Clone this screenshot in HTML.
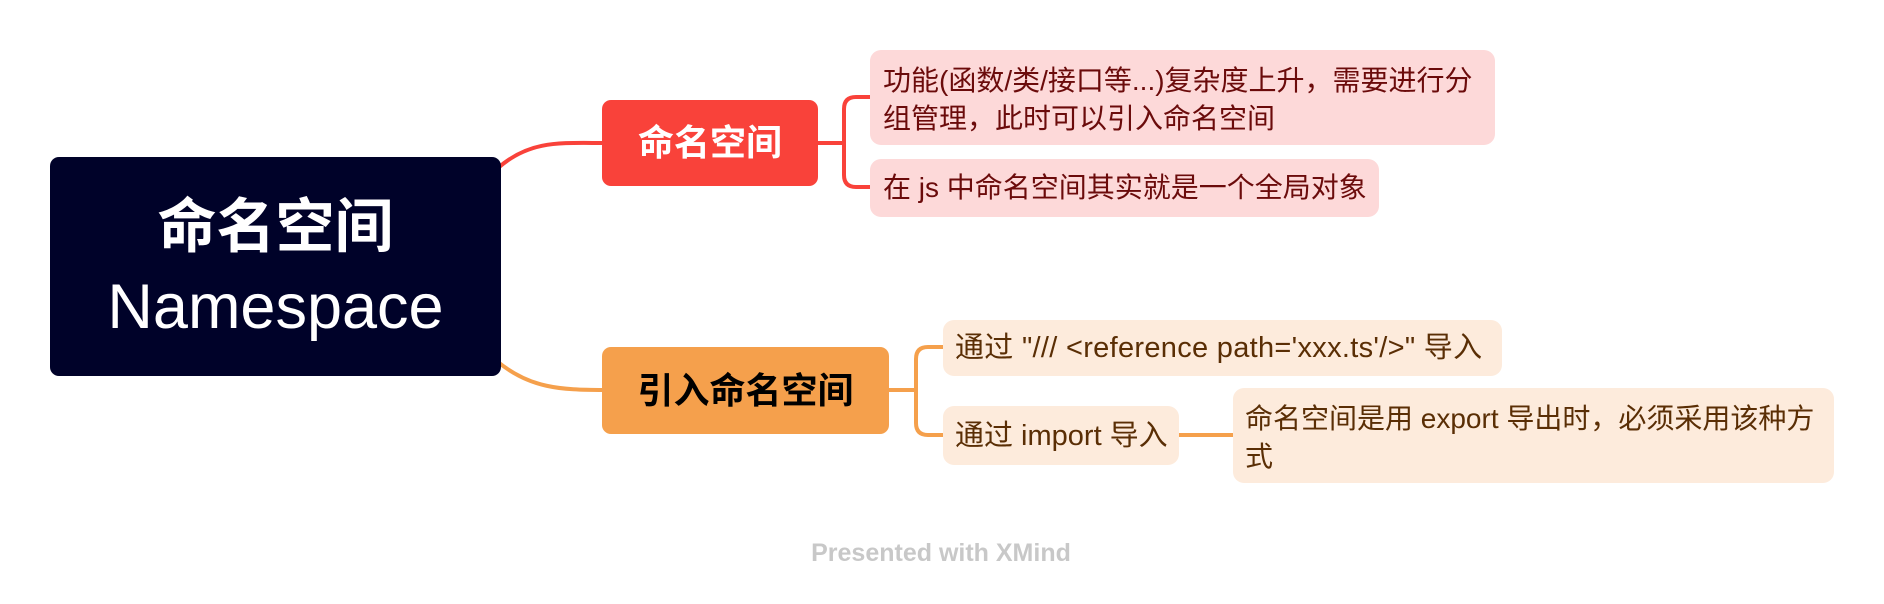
<!DOCTYPE html>
<html><head><meta charset="utf-8"><style>
body{margin:0;width:1884px;height:604px;background:#fff;position:relative;overflow:hidden;font-family:"Liberation Sans","Noto Sans CJK SC",sans-serif}
.b{position:absolute;box-sizing:border-box}
.t{position:absolute;white-space:nowrap}
</style></head><body>
<svg width="1884" height="604" style="position:absolute;left:0;top:0">
<g fill="none" stroke="#f9423a" stroke-width="4">
<path d="M498 168 C530 140 560 143 604 143"/>
<path d="M816 143 H844"/>
<path d="M870 97 H856 Q844 97 844 109 V175 Q844 187 856 187 H870"/>
</g>
<g fill="none" stroke="#f5a04c" stroke-width="4">
<path d="M498 362 C530 388 560 390 604 390"/>
<path d="M887 390 H916"/>
<path d="M943 347 H928 Q916 347 916 359 V423 Q916 435 928 435 H943"/>
<path d="M1177 435 H1235"/>
</g>
</svg>
<div class="b" style="left:50px;top:157px;width:451px;height:219px;background:#000229;border-radius:9px"></div>
<div class="t" style="left:50px;width:451px;text-align:center;top:192px;color:#fff;font-size:59px;font-weight:bold;line-height:70px">命名空间</div>
<div class="t" style="left:50px;width:451px;text-align:center;top:270px;color:#fff;font-size:63px;line-height:74px">Namespace</div>

<div class="b" style="left:602px;top:100px;width:216px;height:86px;background:#f9423a;border-radius:9px"></div>
<div class="t" style="left:602px;width:216px;text-align:center;top:120px;color:#fff;font-size:36px;font-weight:bold;line-height:46px">命名空间</div>

<div class="b" style="left:870px;top:50px;width:625px;height:95px;background:#fdd9d9;border-radius:11px"></div>
<div class="t" style="left:883px;top:62px;color:#6b0b0b;font-size:28px;line-height:38px">功能(函数/类/接口等...)复杂度上升，需要进行分<br>组管理，此时可以引入命名空间</div>
<div class="b" style="left:870px;top:159px;width:509px;height:58px;background:#fdd9d9;border-radius:11px"></div>
<div class="t" style="left:883px;top:169px;color:#6b0b0b;font-size:28px;line-height:38px">在 js 中命名空间其实就是一个全局对象</div>

<div class="b" style="left:602px;top:347px;width:287px;height:87px;background:#f5a04c;border-radius:9px"></div>
<div class="t" style="left:602px;width:287px;text-align:center;top:368px;color:#000;font-size:36px;font-weight:bold;line-height:46px">引入命名空间</div>

<div class="b" style="left:943px;top:320px;width:559px;height:56px;background:#fdebdc;border-radius:11px"></div>
<div class="t" style="left:955px;top:329px;color:#5a2e05;font-size:29px;line-height:38px;letter-spacing:0.3px">通过 "/// &lt;reference path='xxx.ts'/&gt;" 导入</div>
<div class="b" style="left:943px;top:406px;width:236px;height:59px;background:#fdebdc;border-radius:11px"></div>
<div class="t" style="left:955px;top:417px;color:#5a2e05;font-size:29px;line-height:38px">通过 import 导入</div>
<div class="b" style="left:1233px;top:388px;width:601px;height:95px;background:#fdebdc;border-radius:11px"></div>
<div class="t" style="left:1245px;top:400px;color:#5a2e05;font-size:28px;line-height:38px">命名空间是用 export 导出时，必须采用该种方<br>式</div>

<div class="t" style="left:741px;width:400px;text-align:center;top:539px;color:#c8c8c8;font-size:25px;font-weight:bold">Presented with XMind</div>
</body></html>
